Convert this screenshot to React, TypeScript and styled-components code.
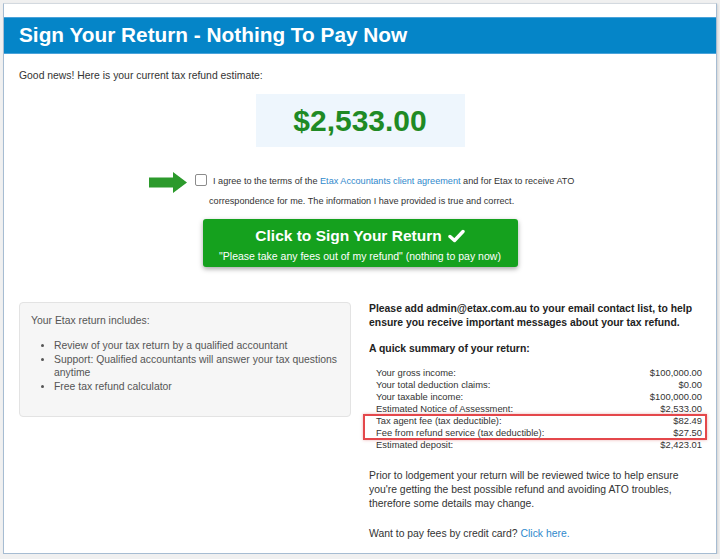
import React from "react";
import styled, { createGlobalStyle } from "styled-components";

const GlobalStyle = createGlobalStyle`
  html, body { margin: 0; padding: 0; background: #f0f0f0; }
  body { font-family: "Liberation Sans", Arial, sans-serif; color: #333; }
`;

const Frame = styled.div`
  box-sizing: border-box;
  margin: 3px 0 0 3px;
  width: 714px;
  height: 551px;
  background: #fff;
  border: 1px solid #a6bcd2;
  border-top-color: #d3d9df;
  padding-top: 13px;
  box-shadow: 1px 1px 2px rgba(0, 0, 0, 0.12);
`;

const Header = styled.header`
  box-sizing: border-box;
  height: 37px;
  background: #0585c8;
  border-top: 1px solid #4aa3da;
  border-bottom: 1px solid #4aa3da;
  display: flex;
  align-items: center;
  padding-left: 15px;
`;

const Title = styled.h1`
  margin: 0;
  font-size: 20.8px;
  font-weight: bold;
  line-height: 1;
  color: #fff;
`;

const Content = styled.main`
  padding: 0 15px;
`;

const Intro = styled.p`
  margin: 15px 0 0;
  font-size: 10.4px;
  line-height: 14px;
  color: #333;
`;

const AmountBox = styled.div`
  margin: 11px auto 0;
  width: 209px;
  height: 53px;
  background: #eef6fd;
  display: flex;
  align-items: center;
  justify-content: center;
  font-size: 30px;
  font-weight: bold;
  color: #1f8a24;
`;

const AgreeRow = styled.div`
  display: flex;
  align-items: flex-start;
  gap: 8px;
  margin-top: 24px;
  padding-left: 130px;
`;

const Arrow = styled.svg`
  flex: none;
  margin-top: 1px;
`;

const AgreeLabel = styled.label`
  width: 396px;
  font-size: 9.15px;
  line-height: 20px;
  padding-left: 14px;
  text-indent: -14px;
  color: #333;
`;

const Checkbox = styled.input`
  appearance: none;
  display: inline-block;
  box-sizing: border-box;
  width: 12px;
  height: 12px;
  margin: 0 6px 0 0;
  vertical-align: -2px;
  border: 1px solid #8c8c8c;
  border-radius: 2px;
  background: #fff;
`;

const Link = styled.a`
  color: #3189cc;
  text-decoration: none;
`;

const SignButton = styled.button`
  display: flex;
  flex-direction: column;
  align-items: center;
  box-sizing: border-box;
  margin: 8px auto 0;
  width: 315px;
  height: 48px;
  padding: 8px 0 0;
  border: none;
  border-radius: 3px;
  background: #15a11e;
  box-shadow: 0 2px 5px rgba(0, 0, 0, 0.35);
  color: #fff;
  font-family: inherit;
  cursor: pointer;
`;

const ButtonTitle = styled.span`
  display: flex;
  align-items: center;
  gap: 6px;
  font-size: 15.5px;
  font-weight: bold;
  line-height: 18px;
`;

const ButtonSub = styled.span`
  margin-top: 4px;
  font-size: 10.5px;
  line-height: 14px;
`;

const Columns = styled.div`
  display: grid;
  grid-template-columns: 332px 333px;
  column-gap: 18px;
  align-items: start;
  margin-top: 35px;
`;

const InfoPanel = styled.div`
  box-sizing: border-box;
  height: 115px;
  padding: 11px;
  background: #f6f6f6;
  border: 1px solid #e3e3e3;
  border-radius: 4px;
  color: #555;
  font-size: 10.4px;
  line-height: 14px;
`;

const InfoHeading = styled.p`
  margin: 0;
`;

const FeatureList = styled.ul`
  margin: 11px 0 0;
  padding-left: 23px;
  line-height: 13.5px;
`;

const RightCol = styled.div`
  font-size: 10.4px;
  line-height: 14px;
  color: #333;
`;

const Notice = styled.p`
  margin: 0;
  font-weight: bold;
  color: #222;
`;

const SummaryTitle = styled.p`
  margin: 12px 0 0;
  font-weight: bold;
  color: #222;
`;

const SummaryTable = styled.div`
  margin: 11px 0 0 7px;
  font-size: 9.4px;
  line-height: 12px;
  color: #333;
`;

const Row = styled.div`
  display: flex;
  justify-content: space-between;
`;

const HighlightGroup = styled.div`
  position: relative;
  &::after {
    content: "";
    position: absolute;
    left: -13px;
    right: -5px;
    top: -1px;
    bottom: -1px;
    border: 2px solid #e4474b;
    box-shadow: 0 0 3px rgba(200, 40, 40, 0.35);
    pointer-events: none;
  }
`;

const Para = styled.p<{ $gap: number }>`
  margin: ${(p) => p.$gap}px 0 0;
`;

const rowsBefore = [
  ["Your gross income:", "$100,000.00"],
  ["Your total deduction claims:", "$0.00"],
  ["Your taxable income:", "$100,000.00"],
  ["Estimated Notice of Assessment:", "$2,533.00"],
];
const rowsHighlight = [
  ["Tax agent fee (tax deductible):", "$82.49"],
  ["Fee from refund service (tax deductible):", "$27.50"],
];
const rowsAfter = [["Estimated deposit:", "$2,423.01"]];

const renderRows = (rows: string[][]) =>
  rows.map(([k, v]) => (
    <Row key={k}>
      <span>{k}</span>
      <span>{v}</span>
    </Row>
  ));

export default function App() {
  return (
    <>
      <GlobalStyle />
      <Frame>
        <Header>
          <Title>Sign Your Return - Nothing To Pay Now</Title>
        </Header>
        <Content>
          <Intro>Good news! Here is your current tax refund estimate:</Intro>
          <AmountBox>$2,533.00</AmountBox>

          <AgreeRow>
            <Arrow width="38" height="21" viewBox="0 0 38 21">
              <polygon points="0,5.5 24,5.5 24,0 38,10.5 24,21 24,15.5 0,15.5" fill="#2c9a2c" />
            </Arrow>
            <AgreeLabel>
              <Checkbox type="checkbox" />
              I agree to the terms of the <Link href="#">Etax Accountants client agreement</Link> and for Etax to
              receive ATO correspondence for me. The information I have provided is true and correct.
            </AgreeLabel>
          </AgreeRow>

          <SignButton type="button">
            <ButtonTitle>
              Click to Sign Your Return
              <svg width="17" height="14" viewBox="0 0 17 14">
                <polyline
                  points="2,7.5 6.5,11.5 15,2.5"
                  fill="none"
                  stroke="#fff"
                  strokeWidth="3.4"
                  strokeLinecap="round"
                  strokeLinejoin="round"
                />
              </svg>
            </ButtonTitle>
            <ButtonSub>"Please take any fees out of my refund" (nothing to pay now)</ButtonSub>
          </SignButton>

          <Columns>
            <InfoPanel>
              <InfoHeading>Your Etax return includes:</InfoHeading>
              <FeatureList>
                <li>Review of your tax return by a qualified accountant</li>
                <li>Support: Qualified accountants will answer your tax questions anytime</li>
                <li>Free tax refund calculator</li>
              </FeatureList>
            </InfoPanel>

            <RightCol>
              <Notice>
                Please add admin@etax.com.au to your email contact list, to help ensure you receive important
                messages about your tax refund.
              </Notice>
              <SummaryTitle>A quick summary of your return:</SummaryTitle>
              <SummaryTable>
                {renderRows(rowsBefore)}
                <HighlightGroup>{renderRows(rowsHighlight)}</HighlightGroup>
                {renderRows(rowsAfter)}
              </SummaryTable>
              <Para $gap={18}>
                Prior to lodgement your return will be reviewed twice to help ensure you're getting the best
                possible refund and avoiding ATO troubles, therefore some details may change.
              </Para>
              <Para $gap={16}>
                Want to pay fees by credit card? <Link href="#">Click here.</Link>
              </Para>
            </RightCol>
          </Columns>
        </Content>
      </Frame>
    </>
  );
}
